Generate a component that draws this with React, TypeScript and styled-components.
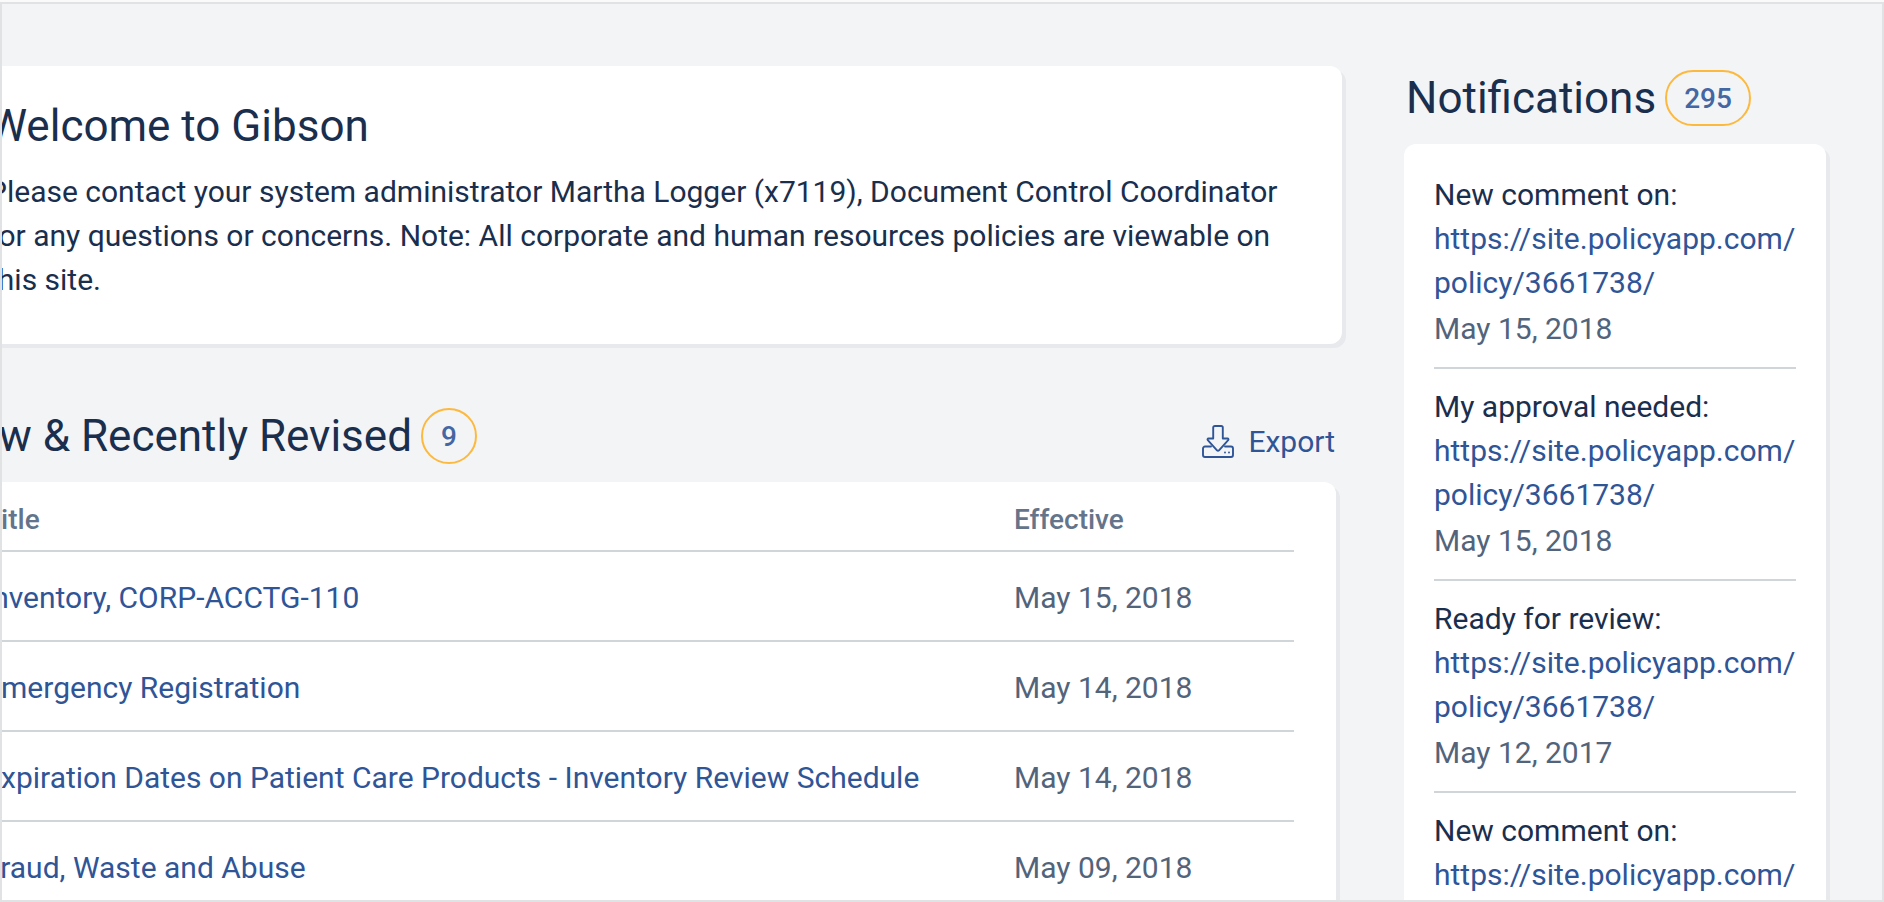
import React from "react";
import styled, { createGlobalStyle } from "styled-components";

const GlobalStyle = createGlobalStyle`
  *, *::before, *::after { box-sizing: border-box; }
  body {
    margin: 0;
    background: #f3f4f6;
    color: #1a2e4d;
    font-family: Roboto, "Liberation Sans", sans-serif;
    font-size: 30px;
    line-height: 44px;
  }
`;

const Frame = styled.div`
  height: 100vh;
  padding-top: 2px;
  background: #fafafa;
  overflow: hidden;
`;

const Viewport = styled.div`
  height: 100%;
  border: 2px solid #e1e2e3;
  background: #f3f4f6;
  overflow: hidden;
`;

const Page = styled.div`
  display: grid;
  grid-template-columns: minmax(0, 1fr) 422px;
  column-gap: 62px;
  align-items: start;
  margin-left: -60px;
  padding: 62px 56px 0 0;
`;

const Main = styled.main`
  display: flex;
  flex-direction: column;
  gap: 64px;
`;

const Aside = styled.aside`
  padding-top: 4px;
`;

const Card = styled.div`
  background: #fff;
  border-radius: 12px;
  box-shadow: 4px 4px 0 #e8e9ed;
`;

const WelcomeCard = styled(Card)`
  padding: 34px 42px 42px 46px;
`;

const TableCard = styled(Card)`
  padding: 0 42px 40px;
`;

const NoticeCard = styled(Card)`
  padding: 13px 30px;
`;

const Heading = styled.h2`
  margin: 0;
  font-size: 44px;
  font-weight: 400;
  line-height: 52px;
`;

const WelcomeText = styled.p`
  margin: 18px 0 0;
`;

const Section = styled.section`
  margin-right: 6px;
`;

const SectionHeader = styled.header`
  display: flex;
  align-items: flex-end;
  gap: 9px;
  margin-bottom: 18px;
  padding-left: 2px;

  ${Heading} {
    padding-bottom: 2px;
  }
`;

const Badge = styled.span`
  min-width: 56px;
  height: 56px;
  padding: 0 17px;
  border: 2px solid #fdb93e;
  border-radius: 28px;
  color: #4466a3;
  font-size: 28px;
  font-weight: 500;
  line-height: 54px;
  text-align: center;
`;

const ExportButton = styled.button`
  display: flex;
  align-items: center;
  gap: 14px;
  margin-left: auto;
  padding: 0 1px;
  border: 0;
  background: none;
  color: #2f5597;
  font: inherit;
  cursor: pointer;
`;

const Table = styled.table`
  width: 100%;
  border-collapse: separate;
  border-spacing: 0;
  table-layout: fixed;
`;

const HeadCell = styled.th<{ $width?: string }>`
  width: ${(p) => p.$width ?? "auto"};
  padding: 18px 0 10px;
  border-bottom: 2px solid #d0d5da;
  color: #64748a;
  font-size: 28px;
  font-weight: 500;
  line-height: 40px;
  text-align: left;
`;

const Cell = styled.td`
  padding: 24px 0 20px;
  border-bottom: 2px solid #d0d5da;
  color: #52647b;
  white-space: nowrap;
`;

const Link = styled.a`
  color: #2f5597;
  text-decoration: none;
`;

const NoticeList = styled.ul`
  margin: 0;
  padding: 0;
  list-style: none;
`;

const Notice = styled.li`
  padding: 16px 0;
  border-bottom: 2px solid #d0d5da;
`;

const NoticeLabel = styled.p`
  margin: 0;
`;

const NoticeDate = styled.p`
  margin: 2px 0 0;
  color: #52647b;
`;

const ExportIcon = () => (
  <svg
    width="32"
    height="34"
    viewBox="0 0 32 34"
    fill="none"
    stroke="currentColor"
    strokeWidth="1.9"
    strokeLinejoin="round"
    strokeLinecap="round"
    aria-hidden="true"
  >
    <path d="M9 21.500H3a2 2 0 0 0-2 2V30a2 2 0 0 0 2 2h26a2 2 0 0 0 2-2v-6.500a2 2 0 0 0-2-2h-6" />
    <path d="M12.800 1h6.400a1.600 1.600 0 0 1 1.600 1.600V13.500h4.700c.9 0 1.300 1 .7 1.700L17 25.300a1.400 1.400 0 0 1-2 0L5.800 15.200c-.6-.7-.2-1.700.7-1.700h4.700V2.600A1.600 1.600 0 0 1 12.800 1z" />
    <path d="M23 27.500h.01M27 27.500h.01" />
  </svg>
);

const policies = [
  { title: "Inventory, CORP-ACCTG-110", date: "May 15, 2018" },
  { title: "Emergency Registration", date: "May 14, 2018" },
  { title: "Expiration Dates on Patient Care Products - Inventory Review Schedule", date: "May 14, 2018" },
  { title: "Fraud, Waste and Abuse", date: "May 09, 2018" },
];

const notices = [
  { label: "New comment on:", date: "May 15, 2018" },
  { label: "My approval needed:", date: "May 15, 2018" },
  { label: "Ready for review:", date: "May 12, 2017" },
  { label: "New comment on:", date: "May 12, 2017" },
];

export default function App() {
  return (
    <Frame>
      <GlobalStyle />
      <Viewport>
        <Page>
          <Main>
            <WelcomeCard>
              <Heading as="h1">Welcome to Gibson</Heading>
              <WelcomeText>
                Please contact your system administrator Martha Logger (x7119), Document Control Coordinator for any
                questions or concerns. Note: All corporate and human resources policies are viewable on this site.
              </WelcomeText>
            </WelcomeCard>
            <Section>
              <SectionHeader>
                <Heading>New &amp; Recently Revised</Heading>
                <Badge>9</Badge>
                <ExportButton type="button">
                  <ExportIcon />
                  Export
                </ExportButton>
              </SectionHeader>
              <TableCard>
                <Table>
                  <thead>
                    <tr>
                      <HeadCell>Title</HeadCell>
                      <HeadCell $width="280px">Effective</HeadCell>
                    </tr>
                  </thead>
                  <tbody>
                    {policies.map((p) => (
                      <tr key={p.title}>
                        <Cell>
                          <Link href="#policy">{p.title}</Link>
                        </Cell>
                        <Cell>{p.date}</Cell>
                      </tr>
                    ))}
                  </tbody>
                </Table>
              </TableCard>
            </Section>
          </Main>
          <Aside>
            <SectionHeader>
              <Heading>Notifications</Heading>
              <Badge>295</Badge>
            </SectionHeader>
            <NoticeCard>
              <NoticeList>
                {notices.map((n, i) => (
                  <Notice key={i}>
                    <NoticeLabel>{n.label}</NoticeLabel>
                    <Link href="https://site.policyapp.com/policy/3661738/">
                      https://site.policyapp.com/
                      <wbr />
                      policy/3661738/
                    </Link>
                    <NoticeDate>{n.date}</NoticeDate>
                  </Notice>
                ))}
              </NoticeList>
            </NoticeCard>
          </Aside>
        </Page>
      </Viewport>
    </Frame>
  );
}
